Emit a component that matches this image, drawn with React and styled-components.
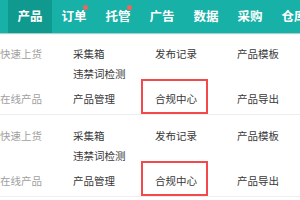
import styled, { createGlobalStyle } from "styled-components";

const GlobalStyle = createGlobalStyle`
    html, body {
        margin: 0;
        padding: 0;
        background: #fff;
        overflow: hidden;
    }
    body {
        font-family: "Noto Sans CJK SC", "Noto Sans", sans-serif;
    }
`;

const Page = styled.div`
    width: 300px;
    height: 200px;
    overflow: hidden;
`;

const NavBar = styled.div`
    display: flex;
    height: 33px;
    padding-left: 8px;
    background: #17b1a7;
    box-shadow: 0 1px 1px rgba(0, 120, 110, 0.35);
    position: relative;
    z-index: 1;
`;

const Tab = styled.div`
    position: relative;
    flex: 0 0 44px;
    display: flex;
    align-items: center;
    justify-content: center;
    color: #fff;
    font-size: 12.5px;
    font-weight: bold;
    line-height: 1;
    background: ${(p) => (p.$active ? "#10998f" : "transparent")};
`;

const Dot = styled.span`
    position: absolute;
    top: 5px;
    right: 8px;
    width: 5px;
    height: 5px;
    border-radius: 50%;
    background: #f0645e;
`;

const Section = styled.div`
    display: flex;
    flex-direction: column;
    gap: 5px;
    padding: 11px 0 5px 0;
    border-bottom: 1px solid #eeeeee;
`;

const Group = styled.div`
    display: flex;
`;

const Label = styled.div`
    flex: 0 0 37px;
    display: flex;
    justify-content: flex-end;
    height: 20px;
    line-height: 20px;
    white-space: nowrap;
    font-size: 10.5px;
    color: #a0a0a0;
`;

const Items = styled.div`
    display: grid;
    grid-template-columns: repeat(3, 82px);
    grid-auto-rows: 20px;
    margin-left: 31px;
`;

const Item = styled.div`
    position: relative;
    line-height: 20px;
    white-space: nowrap;
    font-size: 10.5px;
    color: #383838;

    ${(p) =>
        p.$marked &&
        `
        &::after {
            content: "";
            position: absolute;
            top: -10px;
            bottom: -5px;
            left: -14px;
            right: 29px;
            border: 2px solid #f24a4a;
        }
    `}
`;

const tabs = [
    { name: "产品", active: true },
    { name: "订单", dot: true },
    { name: "托管", dot: true },
    { name: "广告" },
    { name: "数据" },
    { name: "采购" },
    { name: "仓库" },
];

function Block() {
    return (
        <Section>
            <Group>
                <Label>快速上货</Label>
                <Items>
                    <Item>采集箱</Item>
                    <Item>发布记录</Item>
                    <Item>产品模板</Item>
                    <Item>违禁词检测</Item>
                </Items>
            </Group>
            <Group>
                <Label>在线产品</Label>
                <Items>
                    <Item>产品管理</Item>
                    <Item $marked>合规中心</Item>
                    <Item>产品导出</Item>
                </Items>
            </Group>
        </Section>
    );
}

export default function App() {
    return (
        <Page>
            <GlobalStyle />
            <NavBar>
                {tabs.map((t) => (
                    <Tab key={t.name} $active={t.active}>
                        {t.name}
                        {t.dot && <Dot />}
                    </Tab>
                ))}
            </NavBar>
            <Block />
            <Block />
        </Page>
    );
}
